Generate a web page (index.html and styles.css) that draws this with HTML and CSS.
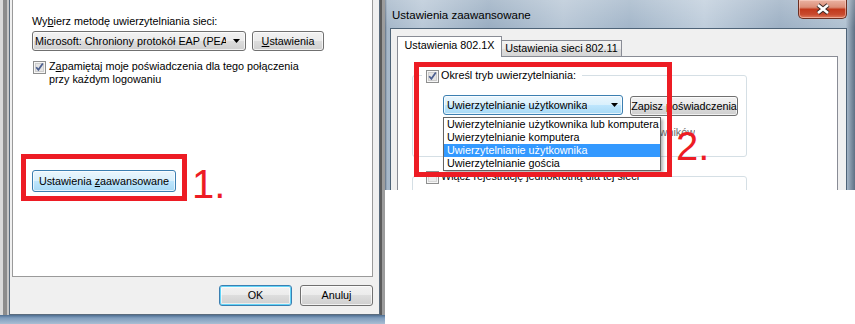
FILE: index.html
```html
<!DOCTYPE html>
<html lang="pl">
<head>
    <meta charset="UTF-8">
    <title>Ustawienia zaawansowane</title>
    <link rel="stylesheet" href="styles.css">
</head>
<body>
<div class="screen">

    <!-- okno właściwości sieci -->
    <div class="win-left">
        <div class="client">
            <div class="panel">
                <p class="label">Wy<u>b</u>ierz metodę uwierzytelniania sieci:</p>
                <div class="row">
                    <div class="combo combo-eap">
                        <span class="combo-text">Microsoft: Chroniony protokół EAP (PEAP)</span>
                        <svg class="arrow" width="7" height="4" viewBox="0 0 7 4"><path d="M0 0h7L3.5 4z" fill="#000"/></svg>
                    </div>
                    <button class="btn btn-set"><span><u>U</u>stawienia</span></button>
                </div>
                <div class="check check-remember">
                    <svg class="cb" width="13" height="13" viewBox="0 0 13 13"><rect x="0.5" y="0.5" width="12" height="12" fill="#f6f6f6" stroke="#8e8f8f"/><rect x="2.5" y="2.5" width="8" height="8" fill="#e4e4e4" stroke="#cdcdcd"/><path d="M3.2 6.2 5.4 8.8 9.8 2.6" fill="none" stroke="#4b5f90" stroke-width="1.7"/></svg>
                    <span>Z<u>a</u>pamiętaj moje poświadczenia dla tego połączenia<br>przy każdym logowaniu</span>
                </div>
                <button class="btn btn-hot btn-adv"><span>Ustawienia <u>z</u>aawansowane</span></button>

                <!-- adnotacja 1 -->
                <div class="mark mark-1"></div>
                <div class="mark-num num-1">1.</div>
            </div>
            <div class="footer">
                <button class="btn btn-default btn-foot">OK</button>
                <button class="btn btn-foot">Anuluj</button>
            </div>
        </div>
    </div>

    <div class="right-col">
        <div class="win-right">
            <div class="titlebar">
                <span class="title">Ustawienia zaawansowane</span>
                <div class="close">
                    <svg width="16" height="12" viewBox="0 0 16 12"><path d="M3 2l10 8M13 2 3 10" stroke="#3b2a28" stroke-width="4.6"/><path d="M3 2l10 8M13 2 3 10" stroke="#fff" stroke-width="2.6"/></svg>
                </div>
            </div>
            <div class="frame">
                <div class="client client-right">
                    <div class="tabs">
                        <div class="tab tab-active">Ustawienia 802.1X</div>
                        <div class="tab">Ustawienia sieci 802.11</div>
                    </div>
                    <div class="tab-panel">
                        <div class="group group-auth">
                            <div class="legend">
                                <svg class="cb" width="13" height="13" viewBox="0 0 13 13"><rect x="0.5" y="0.5" width="12" height="12" fill="#f6f6f6" stroke="#8e8f8f"/><rect x="2.5" y="2.5" width="8" height="8" fill="#e4e4e4" stroke="#cdcdcd"/><path d="M3.2 6.2 5.4 8.8 9.8 2.6" fill="none" stroke="#4b5f90" stroke-width="1.7"/></svg>
                                <span>Określ tryb uwierzytelniania:</span>
                            </div>
                            <div class="auth-row">
                                <div class="combo-wrap">
                                    <div class="combo combo-focus">
                                        <span class="combo-text">Uwierzytelnianie użytkownika</span>
                                        <svg class="arrow" width="7" height="4" viewBox="0 0 7 4"><path d="M0 0h7L3.5 4z" fill="#000"/></svg>
                                    </div>
                                    <ul class="dropdown">
                                        <li>Uwierzytelnianie użytkownika lub komputera</li>
                                        <li>Uwierzytelnianie komputera</li>
                                        <li class="sel">Uwierzytelnianie użytkownika</li>
                                        <li>Uwierzytelnianie gościa</li>
                                    </ul>
                                </div>
                                <button class="btn btn-save"><span>Zapisz poświadczenia</span></button>
                            </div>
                            <!-- reszta napisu schowana pod listą -->
                            <div class="hint"><span>Usuń poświadczenia użytkowników</span></div>
                        </div>
                        <div class="group group-sso">
                            <div class="legend">
                                <svg class="cb" width="13" height="13" viewBox="0 0 13 13"><rect x="0.5" y="0.5" width="12" height="12" fill="#f6f6f6" stroke="#8e8f8f"/><rect x="2.5" y="2.5" width="8" height="8" fill="#ececec" stroke="#d6d6d6"/></svg>
                                <span>Włącz rejestrację jednokrotną dla tej sieci</span>
                            </div>
                        </div>

                        <!-- adnotacja 2 -->
                        <div class="mark mark-2"></div>
                        <div class="mark-num num-2">2.</div>
                    </div>
                </div>
            </div>
        </div>
    </div>

</div>
</body>
</html>
```

FILE: styles.css
```css
* {
    box-sizing: border-box;
}
body {
    margin: 0;
    background: #fff;
    font-family: "Liberation Sans", Arial, sans-serif;
    font-size: 10.8px;
    line-height: 13px;
    color: #000;
}
u {
    text-decoration-thickness: 1px;
    text-underline-offset: 1px;
}
.screen {
    display: flex;
    width: 855px;
    height: 324px;
    overflow: hidden;
}

/* lewe okno */
.win-left {
    width: 385px;
    height: 324px;
    display: flex;
    flex-direction: column;
    padding: 0 5px 9px 9px;
    background:
        linear-gradient(180deg, transparent 315px, #4d6d90 315px, #7f9dbd 318px, #a9bed3 324px),
        linear-gradient(90deg, #dadada 0 3px, #8c8c8c 3px 7px, #c7c7c7 7px 9px, transparent 9px 380px, #5b5b5b 380px 382px, #9c9c9c 382px 385px);
}
.client {
    flex: 1;
    display: flex;
    flex-direction: column;
    background: #f0f0f0;
    border: 1px solid #5a6b7c;
    border-top: none;
    padding: 0 6px 0 2px;
}
.panel {
    position: relative;
    height: 277px;
    background: #fff;
    border: 1px solid #9a9a9a;
    border-top: none;
    padding: 15px 0 0 19px;
}
.label {
    margin: 0;
}
.row {
    display: flex;
    gap: 6px;
    margin-top: 3px;
}
.check {
    display: flex;
    gap: 3px;
    margin-top: 9px;
}
.check .cb {
    margin: 1px 0 0 1px;
    flex: none;
}

/* kontrolki */
.btn {
    display: flex;
    align-items: center;
    justify-content: center;
    height: 20px;
    padding: 0;
    font: inherit;
    color: #000;
    white-space: nowrap;
    border: 1px solid #707070;
    border-radius: 3px;
    background: linear-gradient(180deg, #f2f2f2 0%, #ebebeb 50%, #dddddd 50%, #cfcfcf 100%);
    box-shadow: inset 0 0 0 1px rgba(255,255,255,0.7);
}
.btn-hot {
    border-color: #3c7fb1;
    background: linear-gradient(180deg, #eaf6fd 0%, #d9f0fc 50%, #bee6fd 50%, #a7d9f5 100%);
}
.btn-default {
    border-color: #3c7fb1;
    box-shadow: inset 0 0 0 1px #62d4f8, inset 0 0 0 2px rgba(255,255,255,0.6);
}
.btn-set {
    width: 72px;
}
.btn-adv {
    width: 144px;
    height: 22px;
    margin-top: 84px;
}
.btn-foot {
    width: 73px;
    height: 21px;
}
.btn-save {
    width: 108px;
    margin-top: 1px;
    overflow: hidden;
}
.combo {
    display: flex;
    align-items: center;
    height: 20px;
    border: 1px solid #707070;
    border-radius: 3px;
    background: linear-gradient(180deg, #f2f2f2 0%, #ebebeb 50%, #dddddd 50%, #cfcfcf 100%);
    box-shadow: inset 0 0 0 1px rgba(255,255,255,0.7);
    white-space: nowrap;
}
.combo-text {
    overflow: hidden;
}
.combo-eap {
    width: 214px;
    padding-left: 2px;
}
.combo-eap .combo-text {
    width: 191px;
}
.combo-eap .arrow {
    margin-left: 7px;
}
.combo-focus {
    width: 180px;
    padding-left: 3px;
    border-color: #3c7fb1;
    background: linear-gradient(180deg, #eaf6fd 0%, #d9f0fc 50%, #bee6fd 50%, #a7d9f5 100%);
}
.combo-focus .arrow {
    margin-left: auto;
    margin-right: 4px;
}
.footer {
    flex: 1;
    display: flex;
    justify-content: flex-end;
    gap: 8px;
    padding-top: 8px;
}

/* adnotacje */
.mark {
    position: absolute;
    border: 5px solid #ed1c24;
    z-index: 4;
}
.mark-num {
    position: absolute;
    z-index: 4;
    font-size: 40px;
    line-height: 40px;
    color: #ed1c24;
}
.mark-1 {
    left: 8px;
    top: 154px;
    width: 166px;
    height: 47px;
}
.num-1 {
    left: 179px;
    top: 164px;
}
.mark-2 {
    left: 16px;
    top: 5px;
    width: 258px;
    height: 115px;
}
.num-2 {
    left: 278px;
    top: 69px;
}

/* prawe okno */
.right-col {
    width: 470px;
    height: 324px;
    background: #fff;
}
.win-right {
    height: 190px;
    display: flex;
    flex-direction: column;
    overflow: hidden;
    background:
        linear-gradient(180deg, rgba(255,255,255,0.2) 0, rgba(255,255,255,0) 28px),
        linear-gradient(90deg, #5f7084 0, #a5b7c9 2px, #b9c8d7 8%, #9aaec2 22%, #b8c7d6 38%, #a3b6c9 52%, #c0cedc 68%, #9db0c4 84%, #b1c2d2 98%, #5f7084 100%);
}
.titlebar {
    height: 28px;
    flex: none;
    display: flex;
    padding: 0 8px 0 7px;
}
.title {
    padding-top: 8px;
    font-size: 11.5px;
    line-height: 14px;
}
.close {
    margin-left: auto;
    width: 49px;
    height: 19px;
    display: flex;
    align-items: center;
    justify-content: center;
    border: 1px solid #6b2f22;
    border-top: none;
    border-radius: 0 0 5px 5px;
    background: linear-gradient(180deg, #eab2a2 0%, #dc8f79 40%, #c2391c 52%, #c84a2e 80%, #e07c5e 100%);
    box-shadow: inset 0 0 0 1px rgba(255,220,210,0.5);
}
.frame {
    flex: 1;
    display: flex;
    padding: 0 8px 0 5px;
}
.client-right {
    padding: 7px 8px 0 6px;
    border-color: #4e6377;
    border-bottom: none;
    border-top: 1px solid #4e6377;
}
.tabs {
    display: flex;
    align-items: flex-end;
    margin-bottom: -1px;
    position: relative;
    z-index: 1;
}
.tab {
    height: 17px;
    width: 121px;
    margin-left: -1px;
    padding-top: 1px;
    text-align: center;
    white-space: nowrap;
    border: 1px solid #898c95;
    background: linear-gradient(180deg, #f3f3f3 0%, #ebebeb 50%, #dedede 50%, #d6d6d6 100%);
}
.tab-active {
    position: relative;
    z-index: 1;
    width: 105px;
    height: 21px;
    margin-left: 0;
    padding-top: 2px;
    border-bottom: none;
    background: #fff;
}
.tab-panel {
    flex: 1;
    position: relative;
    background: #fff;
    border: 1px solid #898c95;
    border-bottom: none;
    padding: 18px 0 0 14px;
}
.group {
    width: 335px;
    border: 1px solid #d5dfe5;
    border-radius: 3px;
}
.group-auth {
    height: 82px;
}
.group-sso {
    height: 40px;
    margin-top: 19px;
}
.legend {
    display: flex;
    gap: 2px;
    width: fit-content;
    margin: -7px 0 0 9px;
    padding: 0 6px 0 4px;
    background: #fff;
    white-space: nowrap;
}
.legend .cb {
    margin-top: 1px;
    flex: none;
}
.auth-row {
    display: flex;
    align-items: flex-start;
    gap: 7px;
    margin: 12px 0 0 30px;
}
.combo-wrap {
    position: relative;
}
.dropdown {
    position: absolute;
    left: 0;
    top: 22px;
    z-index: 3;
    width: 218px;
    margin: 0;
    padding: 0;
    list-style: none;
    background: #fff;
    border: 1px solid #646464;
    box-shadow: 2px 2px 3px rgba(0,0,0,0.3);
    white-space: nowrap;
}
.dropdown li {
    height: 13px;
    padding-left: 3px;
}
.dropdown .sel {
    background: #3399ff;
    color: #fff;
}
.hint {
    display: flex;
    justify-content: flex-end;
    overflow: hidden;
    width: 34px;
    margin: 10px 0 0 248px;
    color: #6d6d6d;
    white-space: nowrap;
}
```
